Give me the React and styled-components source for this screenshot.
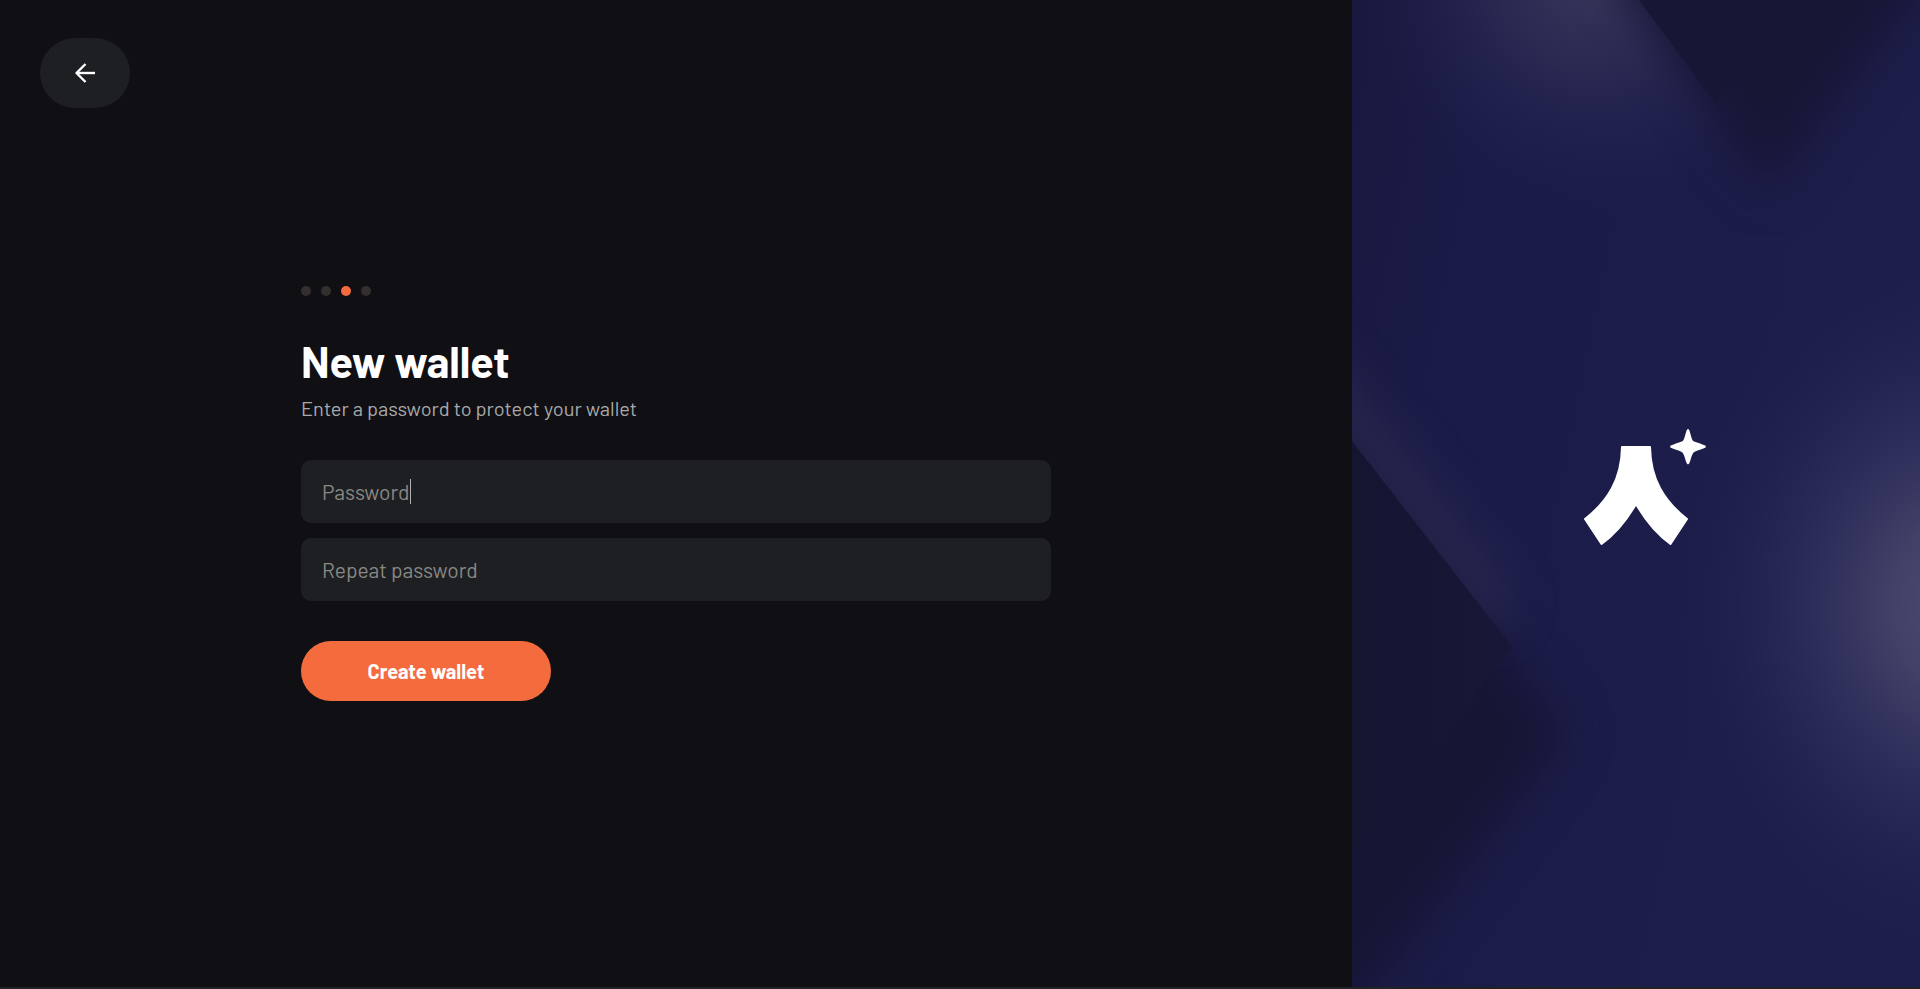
import React from 'react';
import styled, { createGlobalStyle } from 'styled-components';

const GlobalStyle = createGlobalStyle`
  *, *::before, *::after { box-sizing: border-box; }
  body {
    margin: 0;
    background: #101014;
    color: #ffffff;
    font-family: Barlow, Roboto, "Liberation Sans", sans-serif;
  }
`;

const Page = styled.div`
  display: grid;
  grid-template-columns: minmax(0, 1352fr) minmax(0, 568fr);
  min-height: 100vh;
  border-bottom: 2px solid #222224;
`;

const Main = styled.main`
  display: grid;
  grid-template-rows: 1fr auto 1fr;
  padding: 0 40px;
`;

const TopBar = styled.header`
  padding-top: 38px;
`;

const BackButton = styled.button`
  display: flex;
  align-items: center;
  justify-content: center;
  width: 90px;
  height: 70px;
  padding: 0;
  border: 0;
  border-radius: 35px;
  background: #1e1f22;
  color: #ffffff;
  cursor: pointer;
`;

const Form = styled.form`
  display: flex;
  flex-direction: column;
  gap: 40px;
  width: 100%;
  max-width: 750px;
  margin: 0 auto;
`;

const Steps = styled.ol`
  display: flex;
  gap: 10px;
  margin: 0;
  padding: 0;
  list-style: none;
`;

const Step = styled.li`
  width: 10px;
  height: 10px;
  border-radius: 50%;
  background: ${({ $active }) => ($active ? '#f46c3d' : '#332f2e')};
`;

const Heading = styled.div`
  display: flex;
  flex-direction: column;
  gap: 10px;
`;

const Title = styled.h1`
  margin: 0;
  font-size: 43px;
  line-height: 50px;
  font-weight: 700;
`;

const Subtitle = styled.p`
  margin: 0;
  font-size: 20px;
  line-height: 24px;
  color: #a9a9ab;
`;

const Fields = styled.div`
  display: flex;
  flex-direction: column;
  gap: 15px;
`;

const Field = styled.label`
  position: relative;
  display: block;
`;

const Input = styled.input`
  display: block;
  width: 100%;
  height: 63px;
  padding: 0 21px;
  border: 0;
  border-radius: 10px;
  outline: 0;
  background: #1e1f22;
  color: #ffffff;
  caret-color: transparent;
  font-family: inherit;
  font-size: 21px;

  &::placeholder {
    color: #888884;
    opacity: 1;
  }
`;

const Caret = styled.span`
  position: absolute;
  top: 19px;
  left: 109px;
  width: 1px;
  height: 25px;
  background: #b0b0b0;
`;

const SubmitButton = styled.button`
  width: 250px;
  height: 60px;
  padding: 0;
  border: 0;
  border-radius: 30px;
  background: #f46c3d;
  color: #ffffff;
  font-family: inherit;
  font-size: 20px;
  font-weight: 700;
  cursor: pointer;
`;

const Brand = styled.aside`
  position: relative;
  display: flex;
  align-items: center;
  justify-content: center;
  overflow: hidden;
  background: #1c1c4a;
`;

const Artwork = styled.svg`
  position: absolute;
  inset: 0;
  width: 100%;
  height: 100%;
`;

const Logo = styled.svg`
  position: relative;
  width: 140px;
  height: 130px;
`;

function ArrowLeft() {
  return (
    <svg width="24" height="24" viewBox="0 0 24 24" fill="none" stroke="currentColor" strokeWidth="2.4" aria-hidden="true">
      <path d="M22 12H4" />
      <path d="M12.5 3L3.5 12L12.5 21" strokeLinejoin="round" />
    </svg>
  );
}

function BrandArtwork() {
  return (
    <Artwork viewBox="0 0 568 987" preserveAspectRatio="xMidYMid slice" aria-hidden="true">
      <defs>
        <linearGradient id="base" x1="0" y1="0" x2="1" y2="0.35">
          <stop offset="0" stopColor="#18183f" />
          <stop offset="0.25" stopColor="#1b1b48" />
          <stop offset="1" stopColor="#1e1e4c" />
        </linearGradient>
        <radialGradient id="topGlow">
          <stop offset="0" stopColor="#5a5a70" stopOpacity="0.48" />
          <stop offset="0.4" stopColor="#4a4868" stopOpacity="0.3" />
          <stop offset="0.75" stopColor="#343260" stopOpacity="0.12" />
          <stop offset="1" stopColor="#20204e" stopOpacity="0" />
        </radialGradient>
        <radialGradient id="sideGlow">
          <stop offset="0" stopColor="#504f73" stopOpacity="0.95" />
          <stop offset="0.25" stopColor="#47466b" stopOpacity="0.85" />
          <stop offset="0.55" stopColor="#343462" stopOpacity="0.6" />
          <stop offset="0.8" stopColor="#282858" stopOpacity="0.3" />
          <stop offset="1" stopColor="#1e1e4e" stopOpacity="0" />
        </radialGradient>
        <linearGradient id="leftFacet" x1="0" y1="0" x2="1" y2="0">
          <stop offset="0" stopColor="#141531" />
          <stop offset="1" stopColor="#181737" />
        </linearGradient>
        <filter id="soft" x="-60%" y="-60%" width="220%" height="220%" colorInterpolationFilters="sRGB">
          <feGaussianBlur stdDeviation="24" />
        </filter>
      </defs>
      <rect width="568" height="987" fill="url(#base)" />
      <ellipse cx="245" cy="-25" rx="250" ry="240" fill="url(#topGlow)" />
      <ellipse cx="610" cy="605" rx="290" ry="350" fill="url(#sideGlow)" />
      <path d="M240 -60L415 190L605 -60Z" fill="#161635" filter="url(#soft)" />
      <path d="M-80 357L214 735L-80 1112Z" fill="#151534" filter="url(#soft)" />
      <path d="M-80 280L160 595L145 634L-80 344Z" fill="#2e2c52" opacity="0.85" filter="url(#soft)" />
      <path d="M287 0L364 104L443 0Z" fill="#171735" />
      <path d="M0 441L161 648L0 856Z" fill="url(#leftFacet)" />
    </Artwork>
  );
}

function BrandLogo() {
  return (
    <Logo viewBox="0 0 140 130" fill="#ffffff" role="img" aria-label="Wallet logo">
      <path
        d="M56 18H84C84.500 50 98 72 121 90L104.500 115Q85 101 70 75Q55 101 35.500 115L19 90C42 72 55.500 50 56 18Z"
        stroke="#ffffff"
        strokeWidth="2"
        strokeLinejoin="round"
      />
      <path d="M120.800 1Q122 -0.800 123.200 1C125 6 125.500 10.500 127.500 12.200C131 13.500 136 14.800 139.200 16.600Q140.600 17.700 139.200 18.800C135 20.800 131 21.500 127.500 23.400C125.500 26 125 30 123.200 34.600Q122 36.200 120.800 34.600C119 30 118.500 26 116.500 23.400C113 21.500 109 20.800 104.800 18.800Q103.400 17.700 104.800 16.600C108 14.800 113 13.500 116.500 12.200C118.500 10.500 119 6 120.800 1Z" />
    </Logo>
  );
}

export default function App() {
  return (
    <>
      <GlobalStyle />
      <Page>
        <Main>
          <TopBar>
            <BackButton type="button" aria-label="Back">
              <ArrowLeft />
            </BackButton>
          </TopBar>
          <Form onSubmit={(event) => event.preventDefault()}>
            <Steps aria-label="Step 3 of 4">
              {[1, 2, 3, 4].map((step) => (
                <Step key={step} $active={step === 3} aria-current={step === 3 ? 'step' : undefined} />
              ))}
            </Steps>
            <Heading>
              <Title>New wallet</Title>
              <Subtitle>Enter a password to protect your wallet</Subtitle>
            </Heading>
            <Fields>
              <Field>
                <Input type="password" placeholder="Password" aria-label="Password" />
                <Caret />
              </Field>
              <Field>
                <Input type="password" placeholder="Repeat password" aria-label="Repeat password" />
              </Field>
            </Fields>
            <SubmitButton type="submit">Create wallet</SubmitButton>
          </Form>
        </Main>
        <Brand>
          <BrandArtwork />
          <BrandLogo />
        </Brand>
      </Page>
    </>
  );
}
